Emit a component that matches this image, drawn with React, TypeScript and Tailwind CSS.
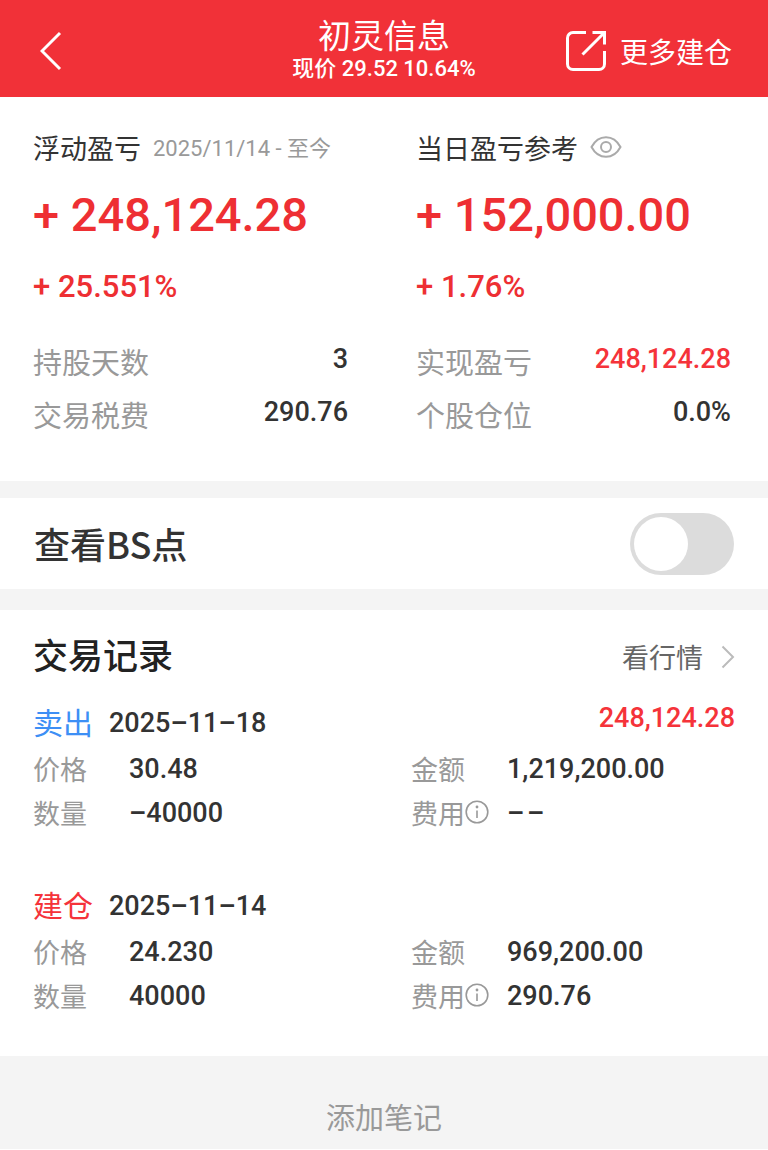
import React, { useState } from 'react';

interface TradeRecord {
  id: string;
  type: 'sell' | 'open';
  date: string;
  profit?: string;
  price: string;
  quantity: string;
  amount: string;
  fee: string;
}

const records: TradeRecord[] = [
  {
    id: 'sell-1118',
    type: 'sell',
    date: '2025–11–18',
    profit: '248,124.28',
    price: '30.48',
    quantity: '–40000',
    amount: '1,219,200.00',
    fee: '–\u200a–',
  },
  {
    id: 'open-1114',
    type: 'open',
    date: '2025–11–14',
    price: '24.230',
    quantity: '40000',
    amount: '969,200.00',
    fee: '290.76',
  },
];

const NUM = "font-[Roboto,'Noto_Sans_CJK_SC',sans-serif] font-medium";

const BackIcon = () => (
  <svg width="22" height="40" viewBox="0 0 22 40" fill="none" stroke="currentColor" strokeWidth="3">
    <path d="M20 2 2 20l18 18" />
  </svg>
);

const ShareIcon = () => (
  <svg width="40" height="40" viewBox="0 0 40 40" fill="none" stroke="currentColor" strokeWidth="3">
    <path d="M20 1.5H7A5.5 5.5 0 0 0 1.5 7v26A5.5 5.5 0 0 0 7 38.5h26a5.5 5.5 0 0 0 5.5-5.5V20" />
    <path d="M26.5 1.5h12v12M38 2 16.5 23.5" />
  </svg>
);

const EyeIcon = () => (
  <svg width="32" height="22" viewBox="0 0 32 22" fill="none" stroke="currentColor" strokeWidth="2">
    <path d="M1.5 11C5 4.5 10 1.2 16 1.2S27 4.5 30.5 11C27 17.5 22 20.8 16 20.8S5 17.5 1.5 11Z" />
    <circle cx="16" cy="11" r="5" />
  </svg>
);

const InfoIcon = () => (
  <svg width="24" height="24" viewBox="0 0 24 24" fill="none" stroke="currentColor" strokeWidth="1.6">
    <circle cx="12" cy="12" r="10.8" />
    <path d="M12 10.5V18" />
    <circle cx="12" cy="7" r="1.4" fill="currentColor" stroke="none" />
  </svg>
);

const ChevronIcon = () => (
  <svg width="14" height="24" viewBox="0 0 14 24" fill="none" stroke="currentColor" strokeWidth="2">
    <path d="m1.5 1.5 10.5 10.5L1.5 22.5" />
  </svg>
);

interface StatProps {
  label: string;
  value: string;
  highlight?: boolean;
}

const Stat: React.FC<StatProps> = ({ label, value, highlight }) => (
  <div className="flex h-[53px] items-center justify-between">
    <dt className="text-[29px] text-[#999999]">{label}</dt>
    <dd className={`${NUM} pb-1 text-[27px] ${highlight ? 'text-[#f5333a]' : 'text-[#333333]'}`}>{value}</dd>
  </div>
);

interface FieldProps {
  label: string;
  value: string;
  info?: boolean;
}

const Field: React.FC<FieldProps> = ({ label, value, info }) => (
  <div className="flex h-11 items-center">
    <dt className="flex w-24 shrink-0 items-center text-[27px] text-[#999999]">
      {label}
      {info && (
        <button type="button" aria-label="费用说明">
          <InfoIcon />
        </button>
      )}
    </dt>
    <dd className={`${NUM} pt-0.5 text-[27px] text-[#333333]`}>{value}</dd>
  </div>
);

const RecordItem: React.FC<{ record: TradeRecord }> = ({ record }) => (
  <li>
    <div className="flex h-[47px] items-center">
      <span className={`pb-1 text-[30px] ${record.type === 'sell' ? 'text-[#3d8ff5]' : 'text-[#f5333a]'}`}>
        {record.type === 'sell' ? '卖出' : '建仓'}
      </span>
      <span className={`${NUM} ml-4 pt-0.5 text-[27px] text-[#333333]`}>{record.date}</span>
      {record.profit && (
        <span className={`${NUM} ml-auto pb-2 text-[27px] text-[#f5333a]`}>{record.profit}</span>
      )}
    </div>
    <dl className="grid grid-cols-2 gap-x-[54px]">
      <Field label="价格" value={record.price} />
      <Field label="金额" value={record.amount} />
      <Field label="数量" value={record.quantity} />
      <Field label="费用" value={record.fee} info />
    </dl>
  </li>
);

export default function App() {
  const [showPoints, setShowPoints] = useState(false);

  return (
    <div className="w-full bg-white font-['Noto_Sans_CJK_SC',sans-serif] leading-none text-[#333333]">
      <header className="grid h-[97px] grid-cols-[1fr_auto_1fr] items-center bg-[#f13138] px-9 text-white">
        <button type="button" aria-label="返回" className="mt-1 ml-1 justify-self-start">
          <BackIcon />
        </button>
        <div className="pt-0.5 text-center">
          <h1 className="text-[33px] leading-[38px]">初灵信息</h1>
          <p className="font-[Roboto,'Noto_Sans_CJK_SC',sans-serif] text-[22px] leading-[32px] font-medium">
            现价 29.52 10.64%
          </p>
        </div>
        <button type="button" className="mt-1 flex items-center gap-[14px] justify-self-end text-[28px]">
          <ShareIcon />
          更多建仓
        </button>
      </header>

      {/* Profit summary */}
      <section className="grid grid-cols-2 gap-x-[68px] pt-8 pr-[37px] pb-[40px] pl-[33px]">
        <div>
          <h2 className="flex h-9 items-center gap-3 text-[27px] whitespace-nowrap">
            浮动盈亏
            <span className="pt-1 font-[Roboto,'Noto_Sans_CJK_SC',sans-serif] text-[22px] text-[#999999]">
              2025/11/14 - 至今
            </span>
          </h2>
          <p className={`${NUM} mt-[18px] text-[47px] leading-[64px] text-[#ee2f33]`}>+ 248,124.28</p>
          <p className={`${NUM} mt-4 text-[31px] leading-[48px] text-[#ee2f33]`}>+ 25.551%</p>
        </div>
        <div>
          <h2 className="flex h-9 items-center gap-3 text-[27px] whitespace-nowrap">
            当日盈亏参考
            <button type="button" aria-label="隐藏金额" className="text-[#aaaaaa]">
              <EyeIcon />
            </button>
          </h2>
          <p className={`${NUM} mt-[18px] text-[47px] leading-[64px] text-[#ee2f33]`}>+ 152,000.00</p>
          <p className={`${NUM} mt-4 text-[31px] leading-[48px] text-[#ee2f33]`}>+ 1.76%</p>
        </div>
        <dl className="mt-6">
          <Stat label="持股天数" value="3" />
          <Stat label="交易税费" value="290.76" />
        </dl>
        <dl className="mt-6">
          <Stat label="实现盈亏" value="248,124.28" highlight />
          <Stat label="个股仓位" value="0.0%" />
        </dl>
      </section>

      {/* BS points toggle */}
      <section className="border-t-[17px] border-[#f4f4f4]">
        <label className="flex h-[91px] cursor-pointer items-center justify-between px-[34px]">
          <span className="pb-0.5 text-[36px] font-medium">查看BS点</span>
          <input
            type="checkbox"
            role="switch"
            checked={showPoints}
            onChange={(e) => setShowPoints(e.target.checked)}
            className="peer sr-only"
          />
          <span className="flex h-[62px] w-[104px] items-center rounded-full bg-[#dcdcdc] px-1 peer-checked:justify-end peer-checked:bg-[#f13138]">
            <span className="size-[54px] rounded-full bg-white" />
          </span>
        </label>
      </section>

      {/* Trade records */}
      <section className="border-t-[21px] border-[#f4f4f4] px-[33px] pb-[39px]">
        <div className="flex h-[89px] items-center justify-between">
          <h2 className="pb-0.5 text-[35px] font-medium text-[#222222]">交易记录</h2>
          <a href="#quote" className="mt-1 flex items-center gap-[18px] text-[27px] text-[#666666]">
            看行情
            <span className="text-[#bbbbbb]">
              <ChevronIcon />
            </span>
          </a>
        </div>
        <ul className="space-y-12">
          {records.map((record) => (
            <RecordItem key={record.id} record={record} />
          ))}
        </ul>
      </section>

      <footer className="bg-[#f4f4f4]">
        <button type="button" className="h-[93px] w-full pt-7 text-[29px] text-[#999999]">
          添加笔记
        </button>
      </footer>
    </div>
  );
}
